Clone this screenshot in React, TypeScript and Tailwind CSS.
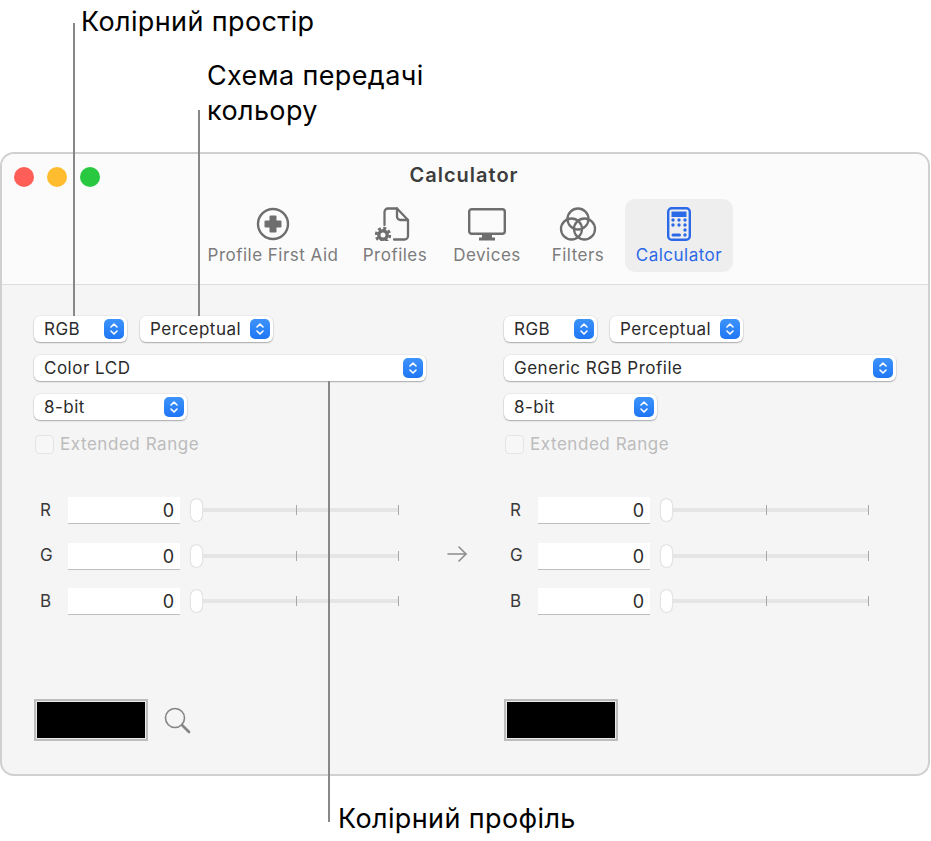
const Stepper = () => (
  <span className="flex h-[20px] w-[20px] items-center justify-center rounded-[5px] bg-gradient-to-b from-[#3d93fb] to-[#1e76f5]">
    <svg width="10" height="16" viewBox="0 0 10 16" fill="none" stroke="white" strokeWidth="1.6" strokeLinecap="round" strokeLinejoin="round">
      <path d="M2 6 L5 3 L8 6" />
      <path d="M2 10 L5 13 L8 10" />
    </svg>
  </span>
);

const Select = ({ label, className }: { label: string; className: string }) => (
  <div className={`flex h-[26px] items-center justify-between rounded-[6px] bg-white pl-[10px] pr-[3px] text-[17px] tracking-[0.5px] text-[#2b2b2b] shadow-[0_0_0_0.5px_rgba(0,0,0,0.08),0_1px_1.5px_rgba(0,0,0,0.28)] ${className}`}>
    <span className="pt-px">{label}</span>
    <Stepper />
  </div>
);

const ChannelRow = ({ label }: { label: string }) => (
  <div className="flex h-[26px] items-center">
    <span className="w-[35px] pl-[7px] pt-px text-[17px] text-[#3a3a3a]">{label}</span>
    <div className="flex h-[26px] w-[112px] items-center justify-end bg-white pr-[6px] pt-px text-[18px] text-[#2b2b2b] shadow-[0_1px_0.5px_rgba(0,0,0,0.22)]">
      0
    </div>
    <div className="ml-[11px] h-[22px] w-[11px] rounded-full bg-white shadow-[0_0_1.5px_rgba(0,0,0,0.35)]" />
    <div className="relative h-[4px] w-[197px] bg-[#e5e5e5]">
      <span className="absolute left-[94px] top-[-3px] h-[10px] w-[1px] bg-[#a8a8a8]" />
      <span className="absolute right-0 top-[-3px] h-[10px] w-[1px] bg-[#a8a8a8]" />
    </div>
  </div>
);

const Panel = ({ isLeft }: { isLeft?: boolean }) => (
  <div className="flex w-[393px] flex-col">
    <div className="flex gap-[13px] pl-[1px]">
      <Select label="RGB" className="w-[93px]" />
      <Select label="Perceptual" className="w-[133px]" />
    </div>
    <div className="mt-[13px] pl-[1px]">
      <Select label={isLeft ? "Color LCD" : "Generic RGB Profile"} className="w-[392px]" />
    </div>
    <div className="mt-[13px] pl-[1px]">
      <Select label="8-bit" className="w-[153px]" />
    </div>
    <div className="mt-[15px] flex h-[19px] items-center pl-[2px]">
      <span className="h-[19px] w-[19px] rounded-[4px] border border-[#e4e4e4] bg-[#f7f7f7]" />
      <span className="ml-[6px] text-[17px] tracking-[0.55px] text-[#bcbcbc]">Extended Range</span>
    </div>
    <div className="mt-[43px] flex flex-col gap-[19.5px]">
      <ChannelRow label="R" />
      <ChannelRow label="G" />
      <ChannelRow label="B" />
    </div>
    <div className="mt-[85px] flex items-start pl-[1px]">
      <div className="h-[42px] w-[114px] border-2 border-[#bdbdbd] bg-[#e9e9e9] p-[1px]">
        <div className="h-full w-full bg-black" />
      </div>
      {isLeft && (
        <svg className="ml-[16px] mt-[8px]" width="27" height="27" viewBox="0 0 27 27" fill="none" stroke="#858585">
          <circle cx="11" cy="11" r="9.5" strokeWidth="1.6" />
          <path d="M18 18 L25 25" strokeWidth="2.6" strokeLinecap="round" />
        </svg>
      )}
    </div>
  </div>
);

const tools = [
  { label: "Profile First Aid", className: "ml-[195px] w-[152px]" },
  { label: "Profiles", className: "ml-[2px] w-[88px]" },
  { label: "Devices", className: "ml-[3px] w-[90px]" },
  { label: "Filters", className: "ml-[8px] w-[76px]" },
  { label: "Calculator", className: "ml-[9px] w-[108px]" },
];

const ToolIcon = ({ name }: { name: string }) => {
  if (name === "Profile First Aid") {
    return (
      <svg width="34" height="34" viewBox="0 0 34 34">
        <circle cx="17" cy="17" r="15" fill="none" stroke="#6e6e6e" strokeWidth="2.4" />
        <path d="M14.5 8.5 h5 a1 1 0 0 1 1 1 V13.5 h4 a1 1 0 0 1 1 1 v5 a1 1 0 0 1 -1 1 h-4 v4 a1 1 0 0 1 -1 1 h-5 a1 1 0 0 1 -1 -1 v-4 h-4 a1 1 0 0 1 -1 -1 v-5 a1 1 0 0 1 1 -1 h4 V9.5 a1 1 0 0 1 1 -1 z" fill="#6e6e6e" />
      </svg>
    );
  }
  if (name === "Profiles") {
    return (
      <svg width="44" height="34" viewBox="0 0 44 34" fill="none" stroke="#6e6e6e" strokeWidth="2.3" strokeLinejoin="round" strokeLinecap="round">
        <path d="M11.5 18 V5 a3.5 3.5 0 0 1 3.5 -3.5 H24 L35 13 V29 a3.5 3.5 0 0 1 -3.5 3.5 H21" />
        <path d="M24 1.5 V9.5 a3.5 3.5 0 0 0 3.5 3.5 H35" />
        <circle cx="10" cy="28" r="4.2" strokeWidth="3.4" />
        <circle cx="10" cy="28" r="6.8" strokeWidth="2.8" strokeDasharray="3 2.34" strokeLinecap="butt" />
      </svg>
    );
  }
  if (name === "Devices") {
    return (
      <svg width="40" height="34" viewBox="0 0 40 34" fill="none">
        <rect x="2.2" y="2.2" width="35.6" height="24.6" rx="2.5" stroke="#6e6e6e" strokeWidth="2.4" />
        <path d="M15 27 h10 v3.5 h3 v3 h-16 v-3 h3 z" fill="#6e6e6e" />
      </svg>
    );
  }
  if (name === "Filters") {
    return (
      <svg width="38" height="34" viewBox="0 0 38 34" fill="none" stroke="#6e6e6e" strokeWidth="2.3">
        <circle cx="19" cy="12" r="10.5" />
        <circle cx="12.5" cy="22" r="10.5" />
        <circle cx="25.5" cy="22" r="10.5" />
      </svg>
    );
  }
  return (
    <svg width="24" height="34" viewBox="0 0 24 34">
      <rect x="1.2" y="1.2" width="21.6" height="31.6" rx="3.5" fill="none" stroke="#2a6ae8" strokeWidth="2.4" />
      <rect x="4.5" y="4.5" width="15" height="5.5" fill="#2a6ae8" />
      {[13, 18, 23].map((y) =>
        [6, 12, 18].map((x) =>
          y === 23 && x < 18 ? null : <circle key={`${x}-${y}`} cx={x} cy={y} r="1.7" fill="#2a6ae8" />
        )
      )}
      <rect x="4.5" y="26.5" width="9.5" height="3" rx="1.5" fill="#2a6ae8" />
      <circle cx="18" cy="28" r="1.7" fill="#2a6ae8" />
    </svg>
  );
};

export default function App() {
  return (
    <div className="relative h-[841px] w-[931px] overflow-hidden bg-white pt-[152px] [font-family:Inter,sans-serif]">
      <div className="h-[624px] w-[930px] overflow-hidden rounded-[14px] border-2 border-[#d0d0d0] bg-[#f5f5f5]">
        <div className="h-[131px] border-b border-[#dcdcdc] bg-[#fbfbfb]">
          <div className="grid h-[45px] grid-cols-[1fr_auto_1fr] items-center">
            <div className="flex gap-[13px] pl-[12px]">
              <span className="h-[20px] w-[20px] rounded-full bg-[#ff5f57]" />
              <span className="h-[20px] w-[20px] rounded-full bg-[#febc2e]" />
              <span className="h-[20px] w-[20px] rounded-full bg-[#28c840]" />
            </div>
            <span className="mb-[3px] pr-[2px] text-[20px] font-semibold tracking-[1px] text-[#3d3d3d]">Calculator</span>
          </div>
          <div className="flex">
            {tools.map((tool) => {
              const active = tool.label === "Calculator";
              return (
                <div
                  key={tool.label}
                  className={`flex h-[73px] flex-col items-center pt-[8px] ${tool.className} ${active ? "rounded-[10px] bg-[#eeeeee] text-[#2a6ae8]" : "text-[#7c7c7c]"}`}
                >
                  <ToolIcon name={tool.label} />
                  <span className="mt-[4px] text-[17px] leading-[20px] tracking-[0.48px]">{tool.label}</span>
                </div>
              );
            })}
          </div>
        </div>
        <div className="flex pl-[31px] pt-[31px]">
          <Panel isLeft />
          <svg className="ml-[21px] mr-[36px] mt-[230px] self-start" width="20" height="16" viewBox="0 0 20 16" fill="none" stroke="#8a8a8a" strokeWidth="1.5" strokeLinecap="round" strokeLinejoin="round">
            <path d="M1 8 H19" />
            <path d="M12 1 L19 8 L12 15" />
          </svg>
          <Panel />
        </div>
      </div>

      <span className="absolute left-[73px] top-[23px] h-[293px] w-[2px] bg-[#888888]" />
      <span className="absolute left-[198px] top-[110px] h-[206px] w-[2px] bg-[#888888]" />
      <span className="absolute left-[328px] top-[381px] h-[441px] w-[2px] bg-[#888888]" />
      <div className="absolute left-[81px] top-[5px] text-[27px] leading-[34px] tracking-[0.38px] text-black">Колірний простір</div>
      <div className="absolute left-[207px] top-[58px] text-[27px] leading-[35px] tracking-[0.38px] text-black">
        Схема передачі
        <br />
        кольору
      </div>
      <div className="absolute left-[338px] top-[802px] text-[27px] leading-[34px] tracking-[0.38px] text-black">Колірний профіль</div>
    </div>
  );
}
